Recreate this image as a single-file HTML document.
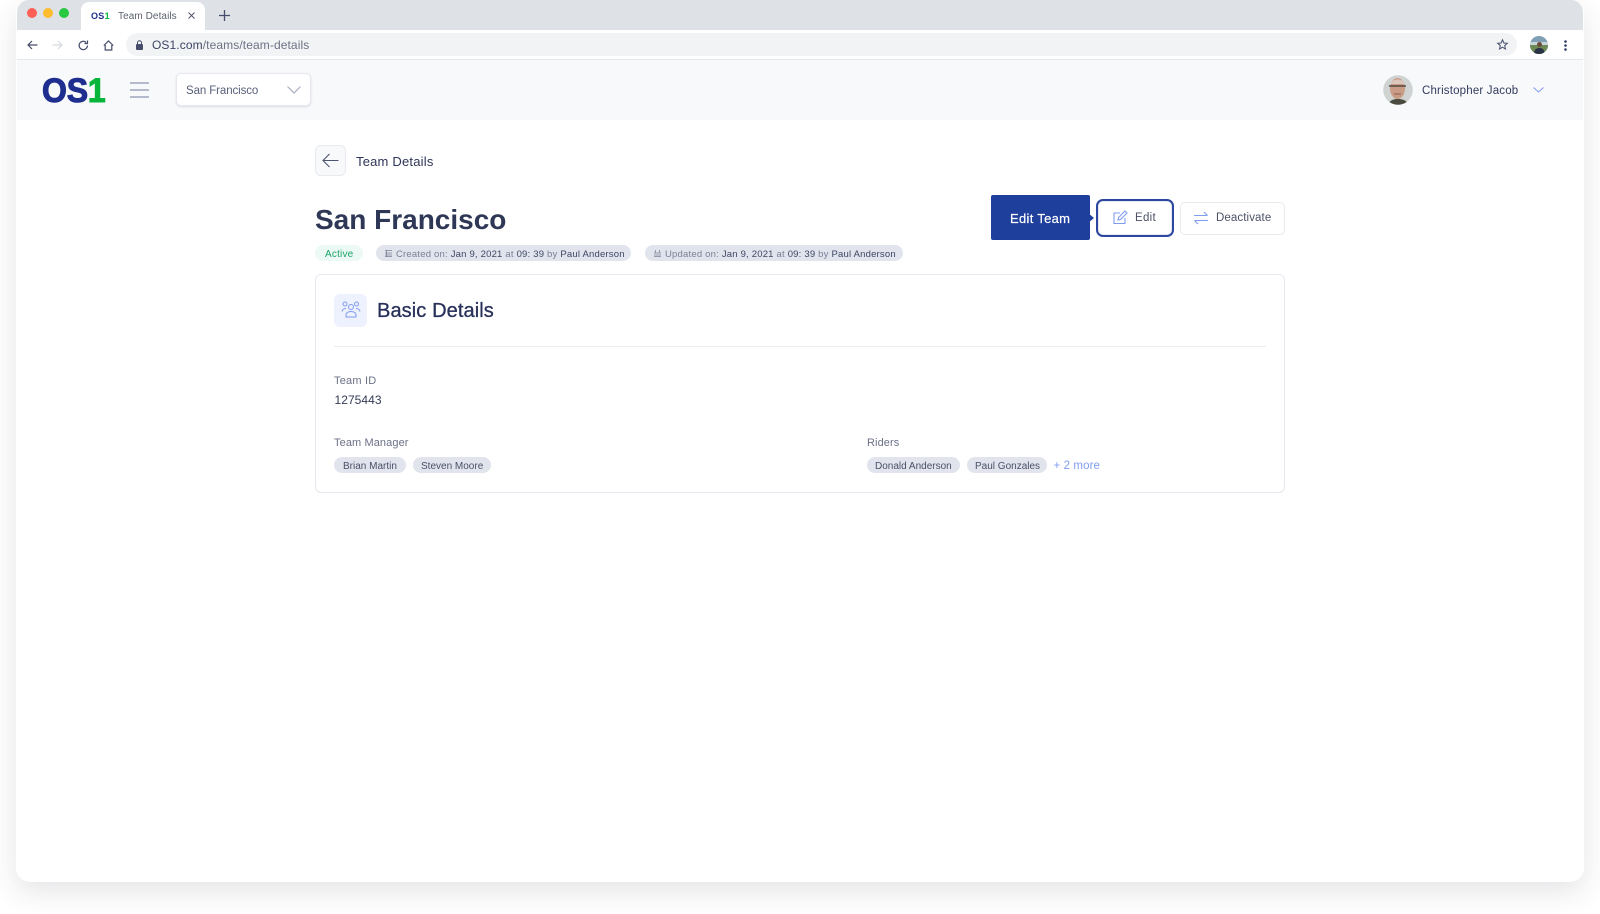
<!DOCTYPE html>
<html><head><meta charset="utf-8"><title>Team Details</title>
<style>
html,body{margin:0;padding:0;background:#fff;width:1600px;height:914px;overflow:hidden}
body{font-family:"Liberation Sans",sans-serif;position:relative}
.a,.t{position:absolute}
.t{white-space:nowrap;line-height:1}
svg{position:absolute;overflow:visible}
.pill{position:absolute;border-radius:9px;background:#e1e4ed;height:16px}
b{font-weight:400;color:#3f4764}
</style></head><body>
<div class="a" style="left:16px;top:0;width:1568px;height:882px;background:#fff;border-radius:12px 12px 14px 14px;box-shadow:0 10px 28px rgba(40,45,60,.12)"></div>
<div class="a" style="left:17px;top:0;width:1566px;height:29.500px;background:#dee1e6;border-radius:12px 12px 0 0"></div>
<div class="a" style="left:27px;top:8px;width:10px;height:10px;border-radius:50%;background:#ff5f57"></div>
<div class="a" style="left:43px;top:8px;width:10px;height:10px;border-radius:50%;background:#febc2e"></div>
<div class="a" style="left:59px;top:8px;width:10px;height:10px;border-radius:50%;background:#28c840"></div>
<div class="a" style="left:81px;top:2px;width:124px;height:28px;background:#fff;border-radius:8px 8px 0 0"></div>
<div class="t" style="left:91px;top:11.500px;font-size:9px;font-weight:700;color:#1f2f8f;letter-spacing:.3px">OS<span style="color:#07b53b">1</span></div>
<div class="t" style="left:118px;top:11.500px;font-size:10px;color:#5d6270;letter-spacing:.08px">Team Details</div>
<svg style="left:188px;top:12px" width="7" height="7"><path d="M.5.5l6 6M6.500.5l-6 6" stroke="#50566a" fill="none"/></svg>
<svg style="left:219px;top:10px" width="11" height="11"><path d="M5.500 0v11M0 5.500h11" stroke="#464e6b" stroke-width="1.300" fill="none"/></svg>

<div class="a" style="left:17px;top:29.500px;width:1566px;height:29.500px;background:#fff;border-bottom:1px solid #e7e8ec"></div>
<svg style="left:27px;top:40px" width="11" height="10"><path d="M10.500 5H1M5 1L1 5l4 4" stroke="#454d6b" stroke-width="1.200" fill="none"/></svg>
<svg style="left:52px;top:40px" width="11" height="10"><path d="M.5 5H10M6 1l4 4-4 4" stroke="#d5d8e0" stroke-width="1.200" fill="none"/></svg>
<svg style="left:78px;top:40px" width="11" height="11"><path d="M9.500 5.500a4.200 4.200 0 1 1-1.300-3.100M9.500 .5v3h-3" stroke="#454d6b" stroke-width="1.200" fill="none"/></svg>
<svg style="left:103px;top:40px" width="11" height="11"><path d="M.8 5.500L5.500 1l4.700 4.500M2.200 5v5h6.600V5" stroke="#454d6b" stroke-width="1.200" fill="none"/></svg>
<div class="a" style="left:126px;top:33px;width:1391px;height:23px;background:#f1f3f4;border-radius:12px"></div>
<svg style="left:136px;top:40px" width="7" height="10"><path d="M1.500 4V2.800a2 2 0 0 1 4 0V4" stroke="#454d6b" fill="none"/><rect y="4" width="7" height="6" rx="1" fill="#454d6b"/></svg>
<div class="t" style="left:152px;top:39px;font-size:12px;color:#3c4465;letter-spacing:.1px">OS1.com<span style="color:#6d7285">/teams/team-details</span></div>
<svg style="left:1497px;top:39px" width="11" height="11"><path d="M5.500.8l1.400 3.200 3.400.3-2.600 2.300.8 3.400-3-1.800-3 1.800.8-3.400L.7 4.300l3.400-.3z" stroke="#454d6b" stroke-width="1" fill="none"/></svg>
<svg style="left:1530px;top:36px" width="18" height="18"><defs><clipPath id="c1"><circle cx="9" cy="9" r="9"/></clipPath></defs><g clip-path="url(#c1)"><rect width="18" height="18" fill="#7f9fb5"/><rect y="9" width="18" height="9" fill="#6d8a55"/><rect y="6" width="18" height="3" fill="#c9d6dc"/><circle cx="9.500" cy="8.500" r="2.500" fill="#6d4c3c"/><path d="M4 18c0-5 3-6 5.500-6s5 1 5 6z" fill="#2b3245"/></g></svg>
<svg style="left:1564px;top:40px" width="3" height="11"><circle cx="1.500" cy="1.500" r="1.300" fill="#2f3a66"/><circle cx="1.500" cy="5.500" r="1.300" fill="#2f3a66"/><circle cx="1.500" cy="9.500" r="1.300" fill="#2f3a66"/></svg>

<div class="a" style="left:17px;top:60px;width:1566px;height:60px;background:#f8f9fb"></div>
<div class="t" style="left:42px;top:75px;font-size:32px;font-weight:700;color:#1f2f8f;letter-spacing:-.2px;-webkit-text-stroke:1px #1f2f8f;transform:scaleY(1.08);transform-origin:0 27px">OS<span style="color:#07b53b;-webkit-text-stroke:1px #07b53b">1</span></div>
<svg style="left:130px;top:82px" width="20" height="16"><path d="M0 1h19M0 8h19M0 15h19" stroke="#aab0c6" stroke-width="1.700" fill="none"/></svg>
<div class="a" style="left:176px;top:73px;width:135px;height:33px;box-sizing:border-box;background:#fff;border:1px solid #e6e8ef;border-radius:5px;box-shadow:0 1px 2px rgba(60,70,100,.15)"></div>
<div class="t" style="left:186px;top:85.500px;font-size:11.500px;color:#5a607a;letter-spacing:-.1px">San Francisco</div>
<svg style="left:287px;top:86px" width="14" height="8"><path d="M.5.5L7 7l6.500-6.500" stroke="#a7adc2" stroke-width="1.200" fill="none"/></svg>
<svg style="left:1383px;top:75px" width="30" height="30"><defs><clipPath id="c2"><circle cx="15" cy="15" r="14.800"/></clipPath></defs><g clip-path="url(#c2)"><rect width="30" height="30" fill="#cfd3d2"/><path d="M6 30c0-5 5-6 9-6s9 1 10 6z" fill="#4a4a3e"/><ellipse cx="14.500" cy="13.500" rx="7.500" ry="10.500" fill="#c99c86"/><path d="M8 9c0-6 13-6 13 0z" fill="#ddc6bb"/><path d="M6 11h17" stroke="#3a3634" stroke-width="1.200"/><path d="M11 19h7" stroke="#8a5a4c" stroke-width="1"/></g></svg>
<div class="t" style="left:1422px;top:85.500px;font-size:11.500px;color:#333b5e;letter-spacing:.18px">Christopher Jacob</div>
<svg style="left:1533px;top:87px" width="11" height="6"><path d="M.5.500L5.500 5l5-4.500" stroke="#7f9cf0" fill="none"/></svg>

<div class="a" style="left:315px;top:145px;width:31px;height:31px;box-sizing:border-box;background:#f8f9fb;border:1px solid #e8eaf0;border-radius:6px"></div>
<svg style="left:322px;top:153px" width="17" height="15"><path d="M16.500 7.500H1M7.500 1L1 7.500 7.500 14" stroke="#4d5470" stroke-width="1.100" fill="none"/></svg>
<div class="t" style="left:356px;top:154.500px;font-size:13px;color:#2d3558;letter-spacing:.2px">Team Details</div>
<div class="t" style="left:315px;top:206px;font-size:28px;font-weight:700;color:#2e3756;letter-spacing:0">San Francisco</div>

<div class="pill" style="left:315px;top:245px;width:48px;background:#ecf9f4"></div>
<div class="t" style="left:325px;top:250px;font-size:10px;color:#1ba368;letter-spacing:.2px">Active</div>

<div class="pill" style="left:376px;top:245px;width:255px"></div>
<svg style="left:385px;top:250px" width="7" height="7"><path d="M0 .5h7M0 3h7M0 5h7M0 6.500h7M1.500 0v7" stroke="#7c8296" fill="none" stroke-width=".8"/></svg>
<div class="t" style="left:396px;top:250px;font-size:9.500px;color:#7a7f94;letter-spacing:.2px">Created on: <b>Jan 9, 2021</b> at <b>09: 39</b> by <b>Paul Anderson</b></div>

<div class="pill" style="left:645px;top:245px;width:258px"></div>
<svg style="left:654px;top:250px" width="7" height="7"><path d="M0 3h7M0 5h7M0 6.500h7M1.500 0v2.500M5.500 0v2.500" stroke="#7c8296" fill="none" stroke-width=".8"/></svg>
<div class="t" style="left:665px;top:250px;font-size:9.500px;color:#7a7f94;letter-spacing:.2px">Updated on: <b>Jan 9, 2021</b> at <b>09: 39</b> by <b>Paul Anderson</b></div>

<div class="a" style="left:991px;top:195px;width:99px;height:45px;background:#1f3f9d;border-radius:2px"></div>
<div class="a" style="left:1088px;top:213px;width:0;height:0;border-left:6px solid #1f3f9d;border-top:5px solid transparent;border-bottom:5px solid transparent"></div>
<div class="t" style="left:1010px;top:212px;font-size:13px;color:#fff;letter-spacing:.3px;-webkit-text-stroke:.2px #fff">Edit Team</div>
<div class="a" style="left:1096px;top:199px;width:78px;height:38px;box-sizing:border-box;background:#fff;border:2px solid #2b479f;border-radius:7px;box-shadow:inset 0 0 0 1px #e6e9f2"></div>
<svg style="left:1113px;top:210px" width="15" height="15"><path d="M12 8v5.500H1V3h6M5 10l.5-2.500L12 1l2 2-6.500 6.500z" stroke="#7f9cf0" stroke-width="1.100" fill="none"/></svg>
<div class="t" style="left:1135px;top:213px;font-size:11.500px;color:#4c5166;letter-spacing:.3px">Edit</div>
<div class="a" style="left:1180px;top:202px;width:105px;height:33px;box-sizing:border-box;background:#fff;border:1px solid #e8eaf0;border-radius:5px"></div>
<svg style="left:1194px;top:211px" width="14" height="14"><path d="M0 4.500h13.500M10 1l3.500 3.500M14 9.500H.5M4 13L.5 9.500" stroke="#7f9cf0" stroke-width="1.100" fill="none"/></svg>
<div class="t" style="left:1216px;top:213px;font-size:11.500px;color:#4c5166;letter-spacing:.1px">Deactivate</div>

<div class="a" style="left:315px;top:274px;width:970px;height:219px;box-sizing:border-box;border:1px solid #e6e8ef;border-radius:6px;background:#fff"></div>
<div class="a" style="left:334px;top:294px;width:33px;height:33px;background:#eef2fe;border-radius:6px"></div>
<svg style="left:341px;top:301px" width="20" height="17"><g fill="none" stroke="#7f9cf0" stroke-width="1"><circle cx="4" cy="3" r="2"/><circle cx="15.500" cy="3" r="2"/><circle cx="10" cy="6" r="2.500"/><path d="M5 16v-2c0-2 2-3.500 5-3.500s5 1.500 5 3.500v2zM1 10.500c.5-2 1.500-3 4-3M19 10.500c-.5-2-1.500-3-4-3"/></g></svg>
<div class="t" style="left:377px;top:301px;font-size:20px;color:#27305a;letter-spacing:.1px;-webkit-text-stroke:.3px #27305a">Basic Details</div>
<div class="a" style="left:334px;top:346px;width:932px;height:1px;background:#eceef3"></div>

<div class="t" style="left:334px;top:375.500px;font-size:11px;color:#6b7087;letter-spacing:.2px">Team ID</div>
<div class="t" style="left:334.500px;top:394px;font-size:12px;color:#333b55;letter-spacing:.05px">1275443</div>
<div class="t" style="left:334px;top:437.500px;font-size:11px;color:#6b7087;letter-spacing:.1px">Team Manager</div>
<div class="pill" style="left:334px;top:457px;width:72px"></div>
<div class="t" style="left:343px;top:462px;font-size:10px;color:#4a5068">Brian Martin</div>
<div class="pill" style="left:413px;top:457px;width:78px"></div>
<div class="t" style="left:421px;top:462px;font-size:10px;color:#4a5068">Steven Moore</div>

<div class="t" style="left:867px;top:437.500px;font-size:11px;color:#6b7087;letter-spacing:.1px">Riders</div>
<div class="pill" style="left:867px;top:457px;width:93px"></div>
<div class="t" style="left:875px;top:462px;font-size:10px;color:#4a5068">Donald Anderson</div>
<div class="pill" style="left:967px;top:457px;width:80px"></div>
<div class="t" style="left:975px;top:462px;font-size:10px;color:#4a5068">Paul Gonzales</div>
<div class="t" style="left:1053.500px;top:461px;font-size:11.500px;color:#7f9cf0;letter-spacing:.1px">+ 2 more</div>
</body></html>
